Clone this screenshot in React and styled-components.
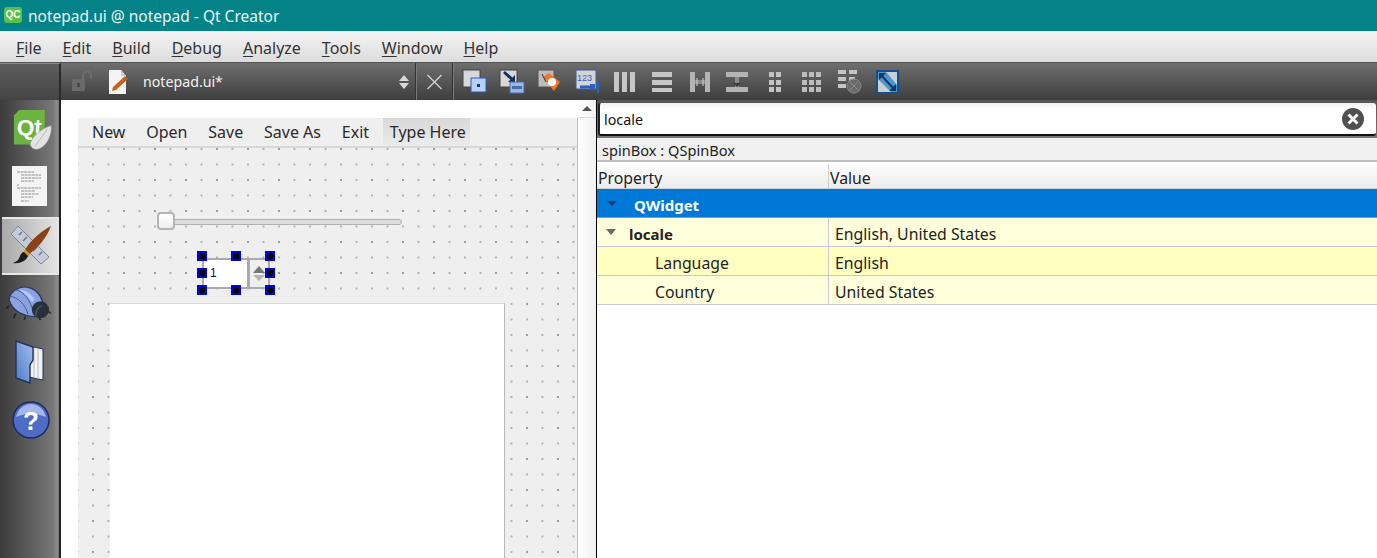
import React from 'react';
import styled, { createGlobalStyle } from 'styled-components';

const FONT = '"Noto Sans", "Open Sans", sans-serif';

const GlobalStyle = createGlobalStyle`
  html, body { margin: 0; padding: 0; height: 100%; overflow: hidden; background: #fff; }
  #root { height: 100%; }
  * { box-sizing: border-box; }
`;

const menus = [
  ['F', 'ile'], ['E', 'dit'], ['B', 'uild'], ['D', 'ebug'],
  ['A', 'nalyze'], ['T', 'ools'], ['W', 'indow'], ['H', 'elp']
];
const formMenus = ['New', 'Open', 'Save', 'Save As', 'Exit'];
const handleRows = [0, 1, 2];

const App = () => (
  <AppWrap>
    <GlobalStyle />
    <TitleBar>
      <AppBadge>QC</AppBadge>
      <span>notepad.ui @ notepad - Qt Creator</span>
    </TitleBar>
    <MenuBar>
      {menus.map(([key, rest]) => (
        <span key={key}><u>{key}</u>{rest}</span>
      ))}
    </MenuBar>
    <EditorBar>
      <BarCorner />
      <DocTools>
        <LockIcon />
        <DocIcon />
        <FileName>notepad.ui*</FileName>
        <UpDownIcon />
        <BarSep />
        <CloseIcon />
        <BarSep />
      </DocTools>
      <ActionTools>
        <ActionSlot><SendBackIcon /></ActionSlot>
        <ActionSlot><BringFrontIcon /></ActionSlot>
        <ActionSlot><TagIcon /></ActionSlot>
        <ActionSlot><BuddyIcon /></ActionSlot>
        <ActionSlot><ColumnsIcon /></ActionSlot>
        <ActionSlot><RowsIcon /></ActionSlot>
        <ActionSlot><SplitHIcon /></ActionSlot>
        <ActionSlot><SplitVIcon /></ActionSlot>
        <ActionSlot><FormIcon /></ActionSlot>
        <ActionSlot><GridIcon /></ActionSlot>
        <ActionSlot><BreakIcon /></ActionSlot>
        <ActionSlot><AdjustIcon /></ActionSlot>
      </ActionTools>
    </EditorBar>
    <Body>
      <Sidebar>
        <ModeSlot $h={60}><QtLogo /></ModeSlot>
        <ModeSlot $h={52}><PageIcon /></ModeSlot>
        <ModeSlot $active $h={58}><DesignIcon /></ModeSlot>
        <ModeSlot $h={58}><BugIcon /></ModeSlot>
        <ModeSlot $h={58}><BookIcon /></ModeSlot>
        <ModeSlot $h={58}><HelpIcon /></ModeSlot>
      </Sidebar>
      <Designer>
        <Form>
          <FormMenu>
            {formMenus.map(name => <FormMenuItem key={name}>{name}</FormMenuItem>)}
            <FormMenuItem $ghost>Type Here</FormMenuItem>
          </FormMenu>
          <Canvas>
            <SliderTrack />
            <SliderHandle />
            <SpinBox>
              <SpinText>1</SpinText>
              <SpinButtons>
                <SpinUp />
                <SpinDown />
              </SpinButtons>
            </SpinBox>
            {handleRows.map(r =>
              handleRows.map(c =>
                r === 1 && c === 1 ? null : <Handle key={`${r}${c}`} $row={r} $col={c} />
              )
            )}
            <TextEdit />
          </Canvas>
        </Form>
        <ScrollBar>
          <ScrollUp><ScrollArrow /></ScrollUp>
        </ScrollBar>
      </Designer>
      <Panel>
        <SearchWrap>
          <SearchField>
            <span>locale</span>
            <ClearIcon />
          </SearchField>
        </SearchWrap>
        <ObjectLabel>spinBox : QSpinBox</ObjectLabel>
        <HeaderRow>
          <HeaderCell $w={232}>Property</HeaderCell>
          <HeaderCell>Value</HeaderCell>
        </HeaderRow>
        <GroupRow>
          <GroupArrow />
          QWidget
        </GroupRow>
        <PropRow>
          <NameCell $bold>
            <PropArrow />
            locale
          </NameCell>
          <ValueCell>English, United States</ValueCell>
        </PropRow>
        <PropRow $alt>
          <NameCell $child>Language</NameCell>
          <ValueCell>English</ValueCell>
        </PropRow>
        <PropRow>
          <NameCell $child>Country</NameCell>
          <ValueCell>United States</ValueCell>
        </PropRow>
      </Panel>
    </Body>
  </AppWrap>
);

export default App;

const LockIcon = () => (
  <svg width="22" height="24" viewBox="0 0 22 24" style={{ marginLeft: 10 }}>
    <rect x="1" y="9" width="13" height="12" fill="#6a6a6a" />
    <rect x="6.5" y="13" width="2" height="4" fill="#3c3c3c" />
    <path d="M12 9V5.5a4 4 0 0 1 8 0V9" fill="none" stroke="#6e6e6e" strokeWidth="2" />
  </svg>
);

const DocIcon = () => (
  <svg width="22" height="28" viewBox="0 0 22 28" style={{ marginLeft: 14 }}>
    <path d="M2 2h12l5 6v18H2z" fill="#f4f4f4" />
    <path d="M14 2l5 6h-5z" fill="#cfcfcf" />
    <path d="M5 23l1-4L18 8l3 3L9 22z" fill="#c8621a" />
  </svg>
);

const UpDownIcon = () => (
  <svg width="12" height="16" viewBox="0 0 12 16" style={{ marginLeft: 'auto', marginRight: 5 }}>
    <path d="M6 1l5 6H1zM6 15l5-6H1z" fill="#d8d8d8" />
  </svg>
);

const CloseIcon = () => (
  <svg width="35" height="16" viewBox="0 0 35 16">
    <path d="M10.5 1l14 14M24.5 1l-14 14" stroke="#d0d0d0" strokeWidth="1.4" />
  </svg>
);

const SendBackIcon = () => (
  <svg width="26" height="25" viewBox="0 0 26 25">
    <rect x="1" y="1" width="17" height="17" fill="#d8d8d8" stroke="#444" />
    <rect x="9" y="9" width="15" height="14" fill="#b8d0f6" stroke="#2a5cb8" />
    <rect x="15" y="15" width="3" height="3" fill="#123a80" />
  </svg>
);

const BringFrontIcon = () => (
  <svg width="26" height="25" viewBox="0 0 26 25">
    <rect x="1" y="1" width="17" height="17" fill="#d8d8d8" stroke="#444" />
    <path d="M5 3l10 9" stroke="#14305f" strokeWidth="3" />
    <path d="M9 13l7-7v7z" fill="#14305f" />
    <rect x="11" y="13" width="14" height="11" fill="#9ab8e4" stroke="#4a6a9a" />
    <rect x="13" y="17" width="10" height="3" fill="#4a6aa8" />
  </svg>
);

const TagIcon = () => (
  <svg width="25" height="25" viewBox="0 0 25 25">
    <rect x="1" y="1" width="16" height="17" fill="#bdbdbd" stroke="#555" />
    <path d="M6 8l6-4 11 9-6 9z" fill="#f4762a" />
    <circle cx="15" cy="13" r="4" fill="#fff" />
    <path d="M5 5l4 8" stroke="#333" />
  </svg>
);

const BuddyIcon = () => (
  <svg width="25" height="25" viewBox="0 0 25 25">
    <rect x="1" y="1" width="20" height="19" fill="#d4d4d4" stroke="#3a5f9e" />
    <text x="2" y="12" fontSize="9" fontFamily="Liberation Sans, sans-serif" fill="#2a62c4">123</text>
    <path d="M5 18h15" stroke="#2a62c4" strokeWidth="3" />
    <path d="M23 13v11" stroke="#2a62c4" strokeWidth="2" />
    <path d="M15 15h5v6h-5z" fill="#2a62c4" />
  </svg>
);

const ColumnsIcon = () => (
  <svg width="21" height="22" viewBox="0 0 21 22">
    <path d="M0 1h5v20H0zM8 1h5v20H8zM16 1h5v20h-5z" fill="#c6c6c6" />
  </svg>
);

const RowsIcon = () => (
  <svg width="20" height="22" viewBox="0 0 20 22">
    <path d="M0 1h20v5H0zM0 9h20v5H0zM0 17h20v4H0z" fill="#c6c6c6" />
  </svg>
);

const SplitHIcon = () => (
  <svg width="20" height="22" viewBox="0 0 20 22">
    <path d="M0 1h5v20H0zM15 1h5v20h-5z" fill="#b4b4b4" />
    <path d="M5 9h10v4H5z" fill="#8c8c8c" />
    <path d="M7 7v8M13 7v8" stroke="#d4d4d4" />
  </svg>
);

const SplitVIcon = () => (
  <svg width="22" height="22" viewBox="0 0 22 22">
    <path d="M0 1h22v5H0zM0 16h22v5H0z" fill="#b4b4b4" />
    <path d="M9 6h4v10H9z" fill="#8c8c8c" />
    <path d="M7 12l4 4 4-4" fill="#3c3c3c" />
  </svg>
);

const FormIcon = () => (
  <svg width="12" height="22" viewBox="0 0 12 22">
    <path d="M0 1h5v5H0zM7 1h5v5H7zM0 9h5v5H0zM7 9h5v5H7zM0 16h5v5H0zM7 16h5v5H7z" fill="#c2c2c2" />
  </svg>
);

const GridIcon = () => (
  <svg width="20" height="22" viewBox="0 0 20 22">
    <path
      d="M0 1h5v5H0zM7 1h5v5H7zM14 1h5v5h-5zM0 9h5v5H0zM7 9h5v5H7zM14 9h5v5h-5zM0 16h5v5H0zM7 16h5v5H7zM14 16h5v5h-5z"
      fill="#bcbcbc"
    />
  </svg>
);

const BreakIcon = () => (
  <svg width="25" height="25" viewBox="0 0 25 25">
    <path d="M1 1h8v4H1zM12 1h8v4h-8zM1 8h8v4H1zM12 8h6v4h-6zM1 15h8v4H1z" fill="#c4c4c4" />
    <circle cx="17" cy="17" r="7" fill="#6a6a6a" stroke="#8a8a8a" />
    <path d="M13 13l8 8M21 13l-8 8" stroke="#8c8c8c" />
  </svg>
);

const AdjustIcon = () => (
  <svg width="23" height="24" viewBox="0 0 23 24">
    <rect x="0" y="0" width="23" height="24" fill="#174f86" />
    <rect x="2" y="2" width="19" height="20" fill="#c8d0d6" />
    <path d="M2 2h8l11 13v7h-6L2 9z" fill="#4f94cc" />
    <path d="M5 5l13 14" stroke="#0c3a66" strokeWidth="2" />
    <path d="M3 3h7L3 10zM20 21h-7l7-7z" fill="#0c3a66" />
  </svg>
);

const QtLogo = () => (
  <svg width="40" height="44" viewBox="0 0 44 46" style={{ marginLeft: 5 }}>
    <path d="M7 1h28v31l-6 7L1 39V7z" fill="#6cb33f" />
    <text x="4" y="28" fontSize="25" fontWeight="700" fontFamily="Liberation Sans, sans-serif" fill="#fff">Qt</text>
    <path d="M42 18c1 10-4 22-14 26-5 1-9-2-9-6 2-9 14-17 23-20z" fill="#e4e4e4" stroke="#9a9a9a" strokeWidth=".6" />
    <path d="M24 41l14-19" stroke="#aaa" strokeWidth=".8" />
  </svg>
);

const PageIcon = () => (
  <svg width="36" height="40" viewBox="0 0 36 40" style={{ marginLeft: -2 }}>
    <rect width="35" height="40" fill="#f4f4f4" />
    <path
      d="M5 6h17M9 9h20M9 12h20M9 15h13M5 19h2M5 22h24M9 25h14M9 28h18M9 31h12M9 35h8"
      stroke="#777"
      strokeWidth=".8"
      strokeDasharray="3 .6"
    />
  </svg>
);

const DesignIcon = () => (
  <svg width="44" height="44" viewBox="0 0 44 44">
    <path d="M9 2L2 10l30 30 8-7z" fill="#c4ccd8" stroke="#7c8496" />
    <path d="M13 8l-3 3M18 13l-4 4M23 18l-3 3M28 23l-4 4M33 28l-3 3" stroke="#68708a" strokeWidth="1.4" />
    <path d="M42 2C34 6 22 15 16 26l4 4C30 23 38 13 42 2z" fill="#8a4316" />
    <path d="M16 25l5 5-2 3-5-4z" fill="#d8962a" />
    <path d="M15 28l4 4c-2 5-8 8-15 7 5-2 6-4 7-7 1-2 2-4 4-4z" fill="#1c1c1c" />
  </svg>
);

const BugIcon = () => (
  <svg width="48" height="38" viewBox="0 0 48 40" style={{ marginLeft: -3 }}>
    <path d="M3 22L0 25M10 30l-2 5M20 33l-1 4M34 33l2 4M42 26l5 4" stroke="#222" strokeWidth="1.6" />
    <path d="M3 15C5 5 16 0 25 3c9 3 14 12 14 20l-6 10C20 34 6 28 3 15z" fill="#8aa2e2" stroke="#27345e" strokeWidth="1.2" />
    <path d="M10 5c8 2 16 10 19 26M5 12c9 2 15 9 18 19" fill="none" stroke="#3d4f8a" strokeWidth=".9" />
    <path d="M14 5c6 0 12 4 16 10l-3 3C23 12 18 8 14 5z" fill="#b8c8f2" />
    <circle cx="36" cy="26" r="9" fill="#2a2f3c" />
    <path d="M31 33c0-6 2-10 7-11" fill="none" stroke="#4c5468" strokeWidth="1.5" />
  </svg>
);

const BookIcon = () => (
  <svg width="30" height="44" viewBox="0 0 30 44" style={{ marginLeft: -2 }}>
    <defs>
      <linearGradient id="bookCover" x1="0" y1="1" x2="1" y2="0">
        <stop offset="0" stopColor="#4f78c4" />
        <stop offset="1" stopColor="#a4c2f2" />
      </linearGradient>
    </defs>
    <path d="M14 6l14 3v31l-14-3z" fill="#f2f2f2" stroke="#1d3260" />
    <path d="M19 8v30M23 9v30" stroke="#b8b8b8" />
    <path d="M1 1l17 6v13l-3 5v18L1 38z" fill="url(#bookCover)" stroke="#1d3260" strokeWidth="1.4" />
  </svg>
);

const HelpIcon = () => (
  <svg width="38" height="38" viewBox="0 0 38 38">
    <circle cx="19" cy="19" r="18" fill="#4e6cc6" stroke="#1c2b5c" strokeWidth="1.5" />
    <path d="M4 16C6 8 12 3 19 3s13 5 15 13c-9-4-21-4-30 0z" fill="#a4b6ea" />
    <text x="19" y="29" textAnchor="middle" fontSize="26" fontWeight="700" fontFamily="Liberation Sans, sans-serif" fill="#fff">?</text>
  </svg>
);

const ClearIcon = () => (
  <svg width="22" height="22" viewBox="0 0 22 22">
    <circle cx="11" cy="11" r="11" fill="#505050" />
    <path d="M6.5 6.5l9 9M15.5 6.5l-9 9" stroke="#fff" strokeWidth="3" />
  </svg>
);

const AppWrap = styled.div`
  display: flex;
  flex-direction: column;
  height: 558px;
  overflow: hidden;
  font-family: ${FONT};
`;

const TitleBar = styled.header`
  display: flex;
  align-items: center;
  height: 31px;
  padding-left: 4px;
  gap: 6px;
  background: #038387;
  color: #eaf6f6;
  font-size: 15.5px;
`;

const AppBadge = styled.span`
  display: flex;
  align-items: center;
  justify-content: center;
  width: 18px;
  height: 16px;
  margin-top: -2px;
  border-radius: 3px;
  background: #57c24a;
  color: #fff;
  font: 700 10px 'Liberation Sans', sans-serif;
`;

const MenuBar = styled.nav`
  display: flex;
  align-items: center;
  gap: 21px;
  height: 32px;
  padding: 2px 0 0 16px;
  background: linear-gradient(#f4f4f4, #dcdcdc);
  border-bottom: 1px solid #555;
  color: #333;
  font-size: 16px;
  u { text-underline-offset: 2px; }
`;

const EditorBar = styled.div`
  display: flex;
  height: 37px;
  background: linear-gradient(#6e6e6e, #3e3e3e);
`;

const BarCorner = styled.div`
  width: 61px;
  border-right: 2px solid #2a2a2a;
  border-top: 1px solid #8a8a8a;
  background: linear-gradient(#5e5e5e, #444);
`;

const DocTools = styled.div`
  display: flex;
  align-items: center;
  width: 393px;
`;

const FileName = styled.span`
  margin-left: 14px;
  color: #f2f2f2;
  font-size: 14.2px;
`;

const BarSep = styled.div`
  align-self: stretch;
  width: 2px;
  background: #7a7a7a;
  border-left: 1px solid #333;
`;

const ActionTools = styled.div`
  display: flex;
  align-items: center;
  padding-left: 2px;
`;

const ActionSlot = styled.div`
  display: flex;
  justify-content: center;
  width: 37.5px;
`;

const Body = styled.div`
  flex: 1;
  display: flex;
  min-height: 0;
`;

const Sidebar = styled.aside`
  display: flex;
  flex-direction: column;
  flex: none;
  width: 61px;
  padding-left: 2px;
  background: linear-gradient(90deg, #3c3c3c, #777 90%, #8e8e8e 97%, #777);
  border-right: 2px solid #222;
`;

const ModeSlot = styled.div`
  display: flex;
  align-items: center;
  justify-content: center;
  height: ${({ $h }) => $h}px;
  ${({ $active }) =>
    $active &&
    `
    margin-top: 5px;
    background: linear-gradient(90deg, #a8a8a8, #e6e6e6);
    border-top: 2px solid #e8e8e8;
    border-bottom: 2px solid #e8e8e8;
  `};
`;

const Designer = styled.main`
  display: flex;
  flex: none;
  width: 536px;
  border-right: 1px solid #000;
`;

const Form = styled.section`
  display: flex;
  flex-direction: column;
  width: 517px;
  padding: 18px 0 0 17px;
  background: #fff;
`;

const FormMenu = styled.div`
  display: flex;
  align-items: center;
  gap: 6.8px;
  height: 30px;
  padding-left: 7px;
  background: #efefef;
  border-bottom: 2px solid #d8d8d8;
  border-right: 1px solid #c0c0c0;
  color: #2a2a2a;
  font-size: 16px;
`;

const FormMenuItem = styled.span`
  display: flex;
  align-items: center;
  height: 28px;
  padding: 0 7px;
  ${({ $ghost }) => $ghost && 'background: linear-gradient(#d8d8d8, #ececec); padding-right: 4px;'};
`;

const Canvas = styled.div`
  position: relative;
  flex: 1;
  border-right: 1px solid #c0c0c0;
  background-color: #efefef;
  background-image:
    radial-gradient(circle at 1px 1px, #9c9c9c 1px, transparent 1.2px),
    radial-gradient(circle at 1px 1px, #b0b0b0 .7px, transparent 1px);
  background-size: 31px 31px, 15.5px 15.5px;
  background-position: 14px 0, 14px 0;
`;

const SliderTrack = styled.div`
  position: absolute;
  left: 79px;
  top: 71px;
  width: 245px;
  height: 6px;
  border-radius: 3px;
  background: #dcdcdc;
  border: 1px solid #b0b0b0;
`;

const SliderHandle = styled.div`
  position: absolute;
  left: 79px;
  top: 64px;
  width: 18px;
  height: 18px;
  border-radius: 4px;
  background: linear-gradient(#fff, #efefef);
  border: 2px solid #b4b4b4;
`;

const SpinBox = styled.div`
  position: absolute;
  left: 124px;
  top: 110px;
  display: flex;
  width: 68px;
  height: 31px;
  border: 2px solid #aaa;
`;

const SpinText = styled.div`
  flex: 1;
  padding-left: 6px;
  background: #fff;
  border-right: 3px solid #aaa;
  color: #111;
  font: 12px/27px 'Liberation Sans', sans-serif;
`;

const SpinButtons = styled.div`
  display: flex;
  flex-direction: column;
  align-items: center;
  justify-content: center;
  gap: 2px;
  width: 18px;
`;

const SpinUp = styled.div`
  border: 6px solid transparent;
  border-top: 0;
  border-bottom: 7px solid #777;
`;

const SpinDown = styled.div`
  border: 6px solid transparent;
  border-bottom: 0;
  border-top: 6px solid #b4b4b4;
`;

const Handle = styled.div`
  position: absolute;
  left: ${({ $col }) => 119 + $col * 34}px;
  top: ${({ $row }) => 103 + $row * 17}px;
  width: 10px;
  height: 10px;
  background: #000;
  border: 2px solid #0000e0;
`;

const TextEdit = styled.div`
  position: absolute;
  left: 32px;
  top: 155px;
  right: 72px;
  bottom: -4px;
  background: #fff;
  border-right: 1px solid #b8b8b8;
  border-top: 1px solid #d8d8d8;
`;

const ScrollBar = styled.div`
  flex: none;
  width: 18px;
  background: linear-gradient(90deg, #fff, #f0f0f0);
`;

const ScrollUp = styled.div`
  display: flex;
  align-items: center;
  justify-content: center;
  height: 18px;
  border-bottom: 1px solid #ddd;
`;

const ScrollArrow = styled.div`
  border: 5px solid transparent;
  border-top: 0;
  border-bottom: 5px solid #555;
`;

const Panel = styled.section`
  flex: 1;
  display: flex;
  flex-direction: column;
  min-width: 0;
  background: #fff;
  color: #222;
  font-size: 15.8px;
`;

const SearchWrap = styled.div`
  height: 38px;
  padding: 3px 1px 2px 1px;
  background: linear-gradient(#555, #777);
`;

const SearchField = styled.div`
  display: flex;
  align-items: center;
  justify-content: space-between;
  height: 33px;
  padding: 1px 12px 0 4px;
  border-radius: 3px;
  background: linear-gradient(#f0f0f0, #fff 20%);
  border-bottom: 2px solid #111;
  border-left: 2px solid #222;
  color: #111;
  font-size: 14.3px;
`;

const ObjectLabel = styled.div`
  display: flex;
  align-items: center;
  height: 24px;
  padding: 2px 0 0 5px;
  background: #f0f0f0;
  border-bottom: 2px solid #c0c0c0;
  font-size: 14.6px;
`;

const HeaderRow = styled.div`
  display: flex;
  height: 27px;
  padding-top: 2px;
  background: linear-gradient(#fff, #ececec);
  border-bottom: 1px solid #d0d0d0;
`;

const HeaderCell = styled.div`
  display: flex;
  align-items: center;
  flex: ${({ $w }) => ($w ? `0 0 ${$w}px` : 1)};
  padding: 3px 0 0 1px;
  ${({ $w }) => $w && 'border-right: 1px solid #d0d0d0;'};
`;

const GroupRow = styled.div`
  display: flex;
  align-items: center;
  height: 29px;
  padding: 4px 0 0 10px;
  background: #0078d7;
  border-bottom: 1px solid #5aa8e8;
  color: #fff;
  font-weight: 700;
  font-size: 15px;
`;

const GroupArrow = styled.div`
  margin: -4px 17px 0 0;
  border: 5px solid transparent;
  border-bottom: 0;
  border-top: 5px solid #11406e;
`;

const PropRow = styled.div`
  display: flex;
  height: 29px;
  background: ${({ $alt }) => ($alt ? '#ffffc0' : '#ffffdc')};
  border-bottom: 1px solid #c8c8d4;
`;

const NameCell = styled.div`
  display: flex;
  align-items: center;
  flex: 0 0 232px;
  padding: 4px 0 0 ${({ $child }) => ($child ? 58 : 9)}px;
  border-right: 1px solid #c8c8d4;
  font-weight: ${({ $bold }) => ($bold ? 700 : 400)};
  font-size: ${({ $bold }) => ($bold ? 15 : 15.8)}px;
`;

const PropArrow = styled.div`
  margin: -4px 13px 0 0;
  border: 5.5px solid transparent;
  border-bottom: 0;
  border-top: 6px solid #6a6a6a;
`;

const ValueCell = styled.div`
  display: flex;
  align-items: center;
  padding: 4px 0 0 6px;
`;
